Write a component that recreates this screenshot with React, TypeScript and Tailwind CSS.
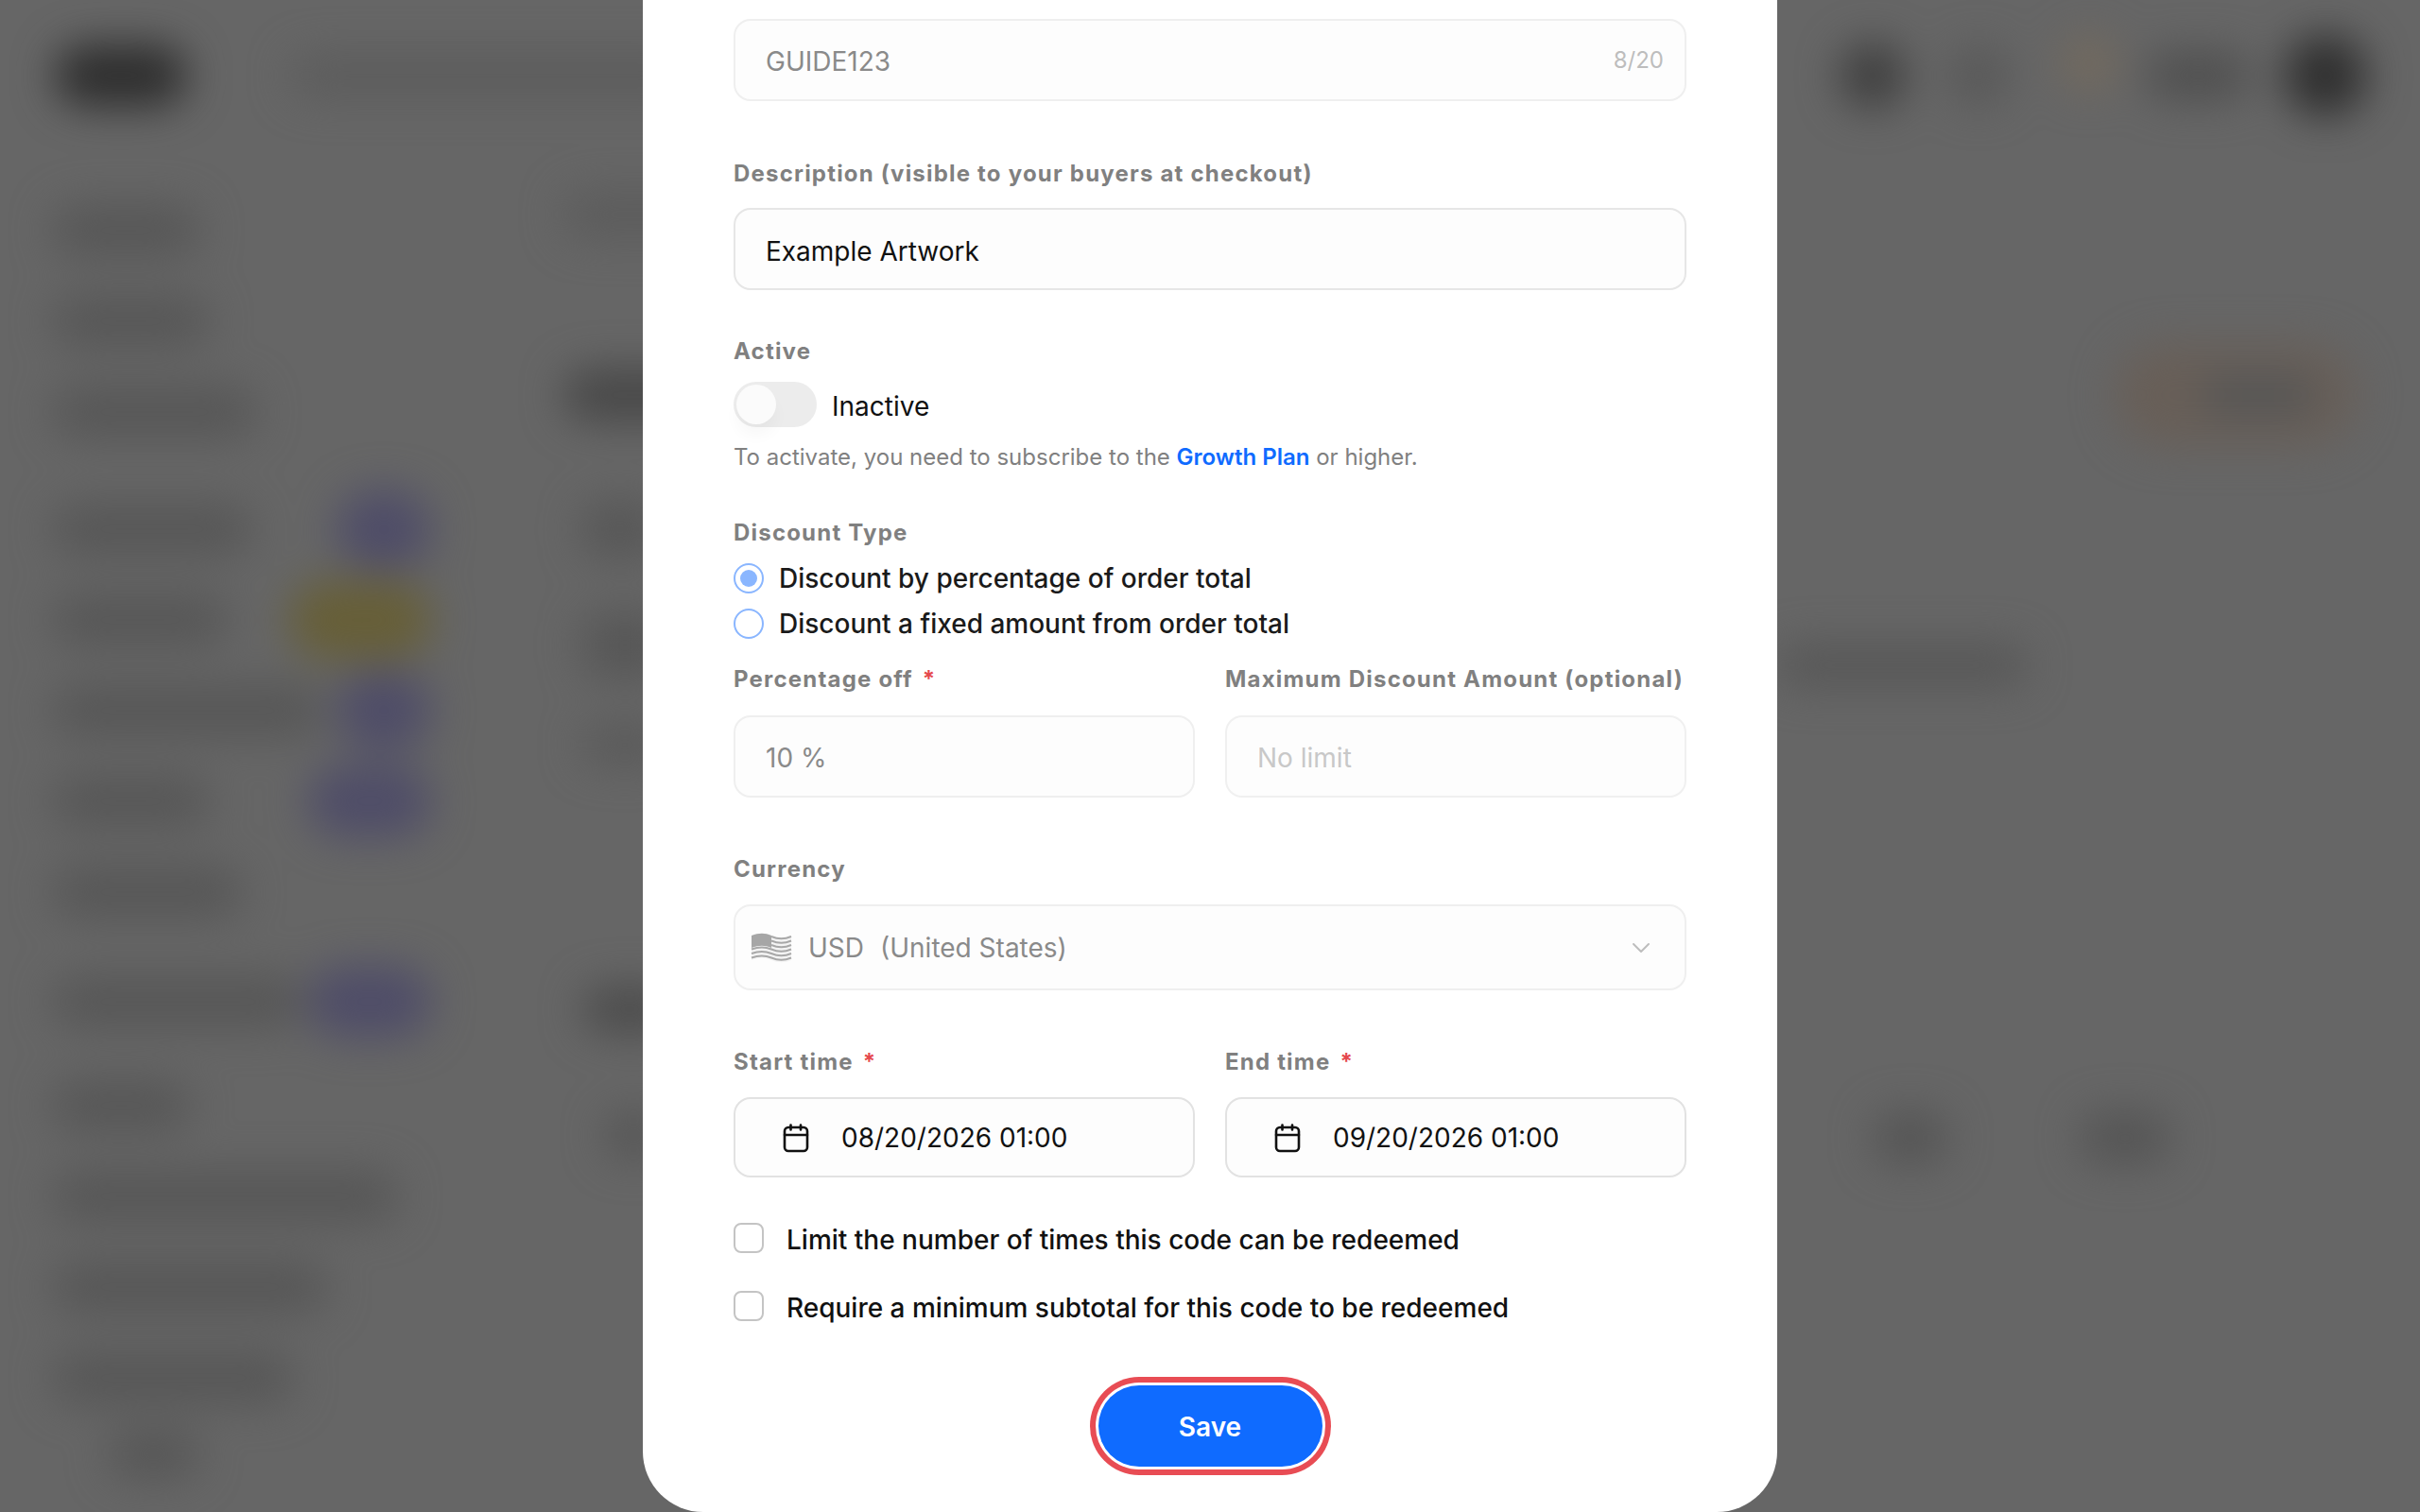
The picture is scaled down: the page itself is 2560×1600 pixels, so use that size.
import { ChevronDown } from 'lucide-react';

function SideRow({ w, pillClass }: { w: string; pillClass?: string }) {
  return (
    <div className="flex h-[96px] items-center justify-between pl-[56px] pr-[30px]">
      <div className={`h-[56px] rounded-full bg-[#575757] ${w}`} />
      {pillClass && <div className={`rounded-full ${pillClass}`} />}
    </div>
  );
}

const purpleSmall = 'h-[84px] w-[100px] bg-[#4f4d68]';
const purpleWide = 'h-[76px] w-[130px] bg-[#4f4d68]';
const yellow = 'h-[84px] w-[150px] bg-[#675f38]';

// the page behind the dialog, only visible as blurred shapes
function BlurredPage() {
  return (
    <div className="flex h-full flex-col blur-[22px]">
      <header className="flex h-[160px] items-center pl-[58px] pr-[56px]">
        <div className="h-[66px] w-[140px] rounded-full bg-[#2e2e2e]" />
        <div className="ml-[110px] h-[44px] w-[430px] rounded-full bg-[#5c5c5c]" />
        <div className="ml-auto mr-[46px] h-[70px] w-[70px] rounded-full bg-[#3f3f3f]" />
        <div className="mr-[56px] h-[62px] w-[62px] rounded-full bg-[#585858]" />
        <div className="mb-[26px] h-[60px] w-[60px] rounded-full bg-[#736a5e]" />
        <div className="ml-[30px] mr-[36px] h-[52px] w-[110px] rounded-full bg-[#505050]" />
        <div className="h-[88px] w-[88px] rounded-full bg-[#303030]" />
      </header>
      <div className="flex flex-1">
        <aside className="w-[486px] shrink-0 pt-[36px]">
          <SideRow w="w-[155px]" />
          <SideRow w="w-[165px]" />
          <SideRow w="w-[215px]" />
          <div className="h-[28px]" />
          <SideRow w="w-[210px]" pillClass={purpleSmall} />
          <SideRow w="w-[185px]" pillClass={yellow} />
          <SideRow w="w-[285px]" pillClass={purpleSmall} />
          <SideRow w="w-[165px]" pillClass={purpleWide} />
          <SideRow w="w-[200px]" />
          <div className="h-[20px]" />
          <SideRow w="w-[265px]" pillClass={purpleWide} />
          <div className="h-[14px]" />
          <SideRow w="w-[145px]" />
          <SideRow w="w-[365px]" />
          <SideRow w="w-[290px]" />
          <SideRow w="w-[255px]" />
          <div className="ml-[115px] mt-[8px] h-[50px] w-[95px] rounded-full bg-[#565656]" />
        </aside>
        <main className="flex-1 pl-[110px] pr-[67px]">
          <div className="mt-[42px] h-[50px] w-[240px] rounded-full bg-[#5c5c5c]" />
          <div className="mt-[111px] flex items-center justify-between">
            <div className="h-[56px] w-[150px] rounded-full bg-[#484848]" />
            <div className="flex h-[110px] w-[256px] items-center justify-end rounded-full bg-[#685f58] pr-[44px]">
              <div className="h-[44px] w-[120px] rounded-full bg-[#565656]" />
            </div>
          </div>
          <div className="mt-[57px] ml-[20px] h-[60px] w-[80px] rounded-[24px] bg-[#575757]" />
          <div className="mt-[58px] ml-[20px] flex items-start">
            <div className="h-[70px] w-[90px] shrink-0 rounded-[24px] bg-[#575757]" />
            <div className="ml-[1174px] mt-[34px] h-[44px] w-[265px] shrink-0 rounded-full bg-[#575757]" />
          </div>
          <div className="mt-[42px] ml-[20px] h-[40px] w-[90px] rounded-[20px] bg-[#595959]" />
          <div className="mt-[235px] ml-[20px] h-[50px] w-[100px] rounded-full bg-[#4c4c4c]" />
          <div className="mt-[83px] flex">
            <div className="ml-[44px] h-[50px] w-[60px] shrink-0 rounded-full bg-[#555]" />
            <div className="ml-[1281px] h-[56px] w-[80px] shrink-0 rounded-full bg-[#555]" />
            <div className="ml-[139px] h-[56px] w-[96px] shrink-0 rounded-full bg-[#555]" />
          </div>
        </main>
      </div>
    </div>
  );
}

function Label({ text, required }: { text: string; required?: boolean }) {
  return (
    <div className="h-[36px] text-[24px] font-bold leading-[36px] tracking-[1.2px] text-[#808080]">
      {text}
      {required && <span className="ml-[10px] text-[#e5484d]">*</span>}
    </div>
  );
}

function Box({ className = '', children }: { className?: string; children: React.ReactNode }) {
  return (
    <div className={`flex items-center rounded-[18px] border-2 bg-[#fdfdfd] text-[28px] ${className}`}>
      {children}
    </div>
  );
}

function CalendarIcon() {
  return (
    <svg width="32" height="32" viewBox="0 0 32 32" fill="none" stroke="#111" strokeWidth="2.6" strokeLinecap="round" strokeLinejoin="round" className="shrink-0">
      <rect x="4" y="5" width="24" height="25" rx="4" />
      <path d="M4 13h24M10.5 2.5v5M21 2.5v5" />
    </svg>
  );
}

// desaturated, waving US flag as the disabled select shows it
function FlagIcon() {
  return (
    <svg width="44" height="34" viewBox="0 0 44 34" fill="none" className="shrink-0">
      <path d="M1 4c8-3 14-3 21 0s14 3 21 0v26c-7 3-14 3-21 0S9 27 1 30z" fill="#f4f4f4" />
      <g stroke="#a8a8a8" strokeWidth="2">
        <path d="M22 5c7 3 14 3 21 0M22 9.5c7 3 14 3 21 0M22 14c7 3 14 3 21 0" />
        <path d="M1 18.5c8-3 14-3 21 0s14 3 21 0M1 23c8-3 14-3 21 0s14 3 21 0M1 27.500c8-3 14-3 21 0s14 3 21 0" />
      </g>
      <path d="M1 4c8-3 14-3 21 0v13c-7-3-13-3-21 0z" fill="#a6a6a6" />
    </svg>
  );
}

function Radio({ checked, label }: { checked?: boolean; label: string }) {
  return (
    <div className="flex h-[48px] items-center gap-[16px]">
      <div className="flex h-[32px] w-[32px] items-center justify-center rounded-full border-2 border-[#8ab6ff] bg-white">
        {checked && <div className="h-[18px] w-[18px] rounded-full bg-[#8ab6ff]" />}
      </div>
      <span className="text-[28px] font-medium text-[#1a1a1a]">{label}</span>
    </div>
  );
}

function Check({ label }: { label: string }) {
  return (
    <div className="flex h-[32px] items-center gap-[24px]">
      <div className="h-[32px] w-[32px] rounded-[8px] border-2 border-[#c4c4c4] bg-white" />
      <span className="pt-[3px] text-[28px] font-medium text-[#111]">{label}</span>
    </div>
  );
}

function Modal() {
  return (
    <div className="flex h-full w-[1200px] flex-col rounded-b-[64px] bg-white px-[96px] pt-[20px]">
      <Box className="h-[87px] justify-between border-[#efefef] pl-[32px] pr-[22px] pt-[3px] text-[#8a8a8a]">
        <span>GUIDE123</span>
        <span className="mb-[2px] text-[24px] text-[#bdbdbd]">8/20</span>
      </Box>

      <div className="mt-[59px]">
        <Label text="Description (visible to your buyers at checkout)" />
      </div>
      <Box className="mt-[18px] h-[87px] border-[#e6e6e6] pl-[32px] pt-[5px] text-[#111]">Example Artwork</Box>

      <div className="mt-[47px]">
        <Label text="Active" />
      </div>
      <div className="mt-[14px] flex h-[48px] items-center gap-[16px]">
        <div className="flex h-[48px] w-[88px] items-center rounded-full bg-[#ececec] px-[3px]">
          <div className="h-[42px] w-[42px] rounded-full bg-[#fbfbfb] shadow-[0_12px_16px_rgba(0,0,0,0.03)]" />
        </div>
        <span className="pt-[3px] text-[28px] text-[#111]">Inactive</span>
      </div>
      <div className="mt-[12px] h-[40px] text-[24px] leading-[40px] text-[#808080]">
        To activate, you need to subscribe to the <span className="font-semibold text-[#0f6bff]">Growth Plan</span> or higher.
      </div>

      <div className="mt-[42px]">
        <Label text="Discount Type" />
      </div>
      <div className="mt-[6px]">
        <Radio checked label="Discount by percentage of order total" />
        <Radio label="Discount a fixed amount from order total" />
      </div>

      <div className="mt-[17px] grid grid-cols-2 gap-x-[32px]">
        <div>
          <Label text="Percentage off" required />
          <Box className="mt-[20px] h-[87px] border-[#efefef] pl-[32px] pt-[2px] text-[#8a8a8a]">10 %</Box>
        </div>
        <div>
          <Label text="Maximum Discount Amount (optional)" />
          <Box className="mt-[20px] h-[87px] border-[#f0f0f0] pl-[32px] pt-[2px] text-[#c8c8c8]">No limit</Box>
        </div>
      </div>

      <div className="mt-[58px]">
        <Label text="Currency" />
      </div>
      <Box className="mt-[19px] h-[91px] border-[#efefef] pl-[16px] pr-[30px] text-[#8a8a8a]">
        <FlagIcon />
        <span className="ml-[17px]">USD</span>
        <span className="ml-[17px]">(United States)</span>
        <ChevronDown className="ml-auto h-[32px] w-[32px] text-[#bdbdbd]" strokeWidth={1.5} />
      </Box>

      <div className="mt-[58px] grid grid-cols-2 gap-x-[32px]">
        <div>
          <Label text="Start time" required />
          <Box className="mt-[19px] h-[85px] border-[#e2e2e2] pl-[48px] text-[#111]">
            <CalendarIcon />
            <span className="ml-[32px]">08/20/2026 01:00</span>
          </Box>
        </div>
        <div>
          <Label text="End time" required />
          <Box className="mt-[19px] h-[85px] border-[#e2e2e2] pl-[48px] text-[#111]">
            <CalendarIcon />
            <span className="ml-[32px]">09/20/2026 01:00</span>
          </Box>
        </div>
      </div>

      <div className="mt-[48px] flex flex-col gap-[40px]">
        <Check label="Limit the number of times this code can be redeemed" />
        <Check label="Require a minimum subtotal for this code to be redeemed" />
      </div>

      <button className="mx-auto mt-[68px] h-[86px] w-[237px] rounded-full bg-[#0f6bff] pt-[2px] text-[28px] font-semibold text-white shadow-[0_0_0_3px_#fff,0_0_0_9px_#e84c54]">
        Save
      </button>
    </div>
  );
}

export default function App() {
  return (
    <div className="relative h-[1600px] overflow-hidden bg-[#666] font-['Inter',sans-serif]">
      <BlurredPage />
      <div className="absolute inset-0 flex justify-center">
        <Modal />
      </div>
    </div>
  );
}
